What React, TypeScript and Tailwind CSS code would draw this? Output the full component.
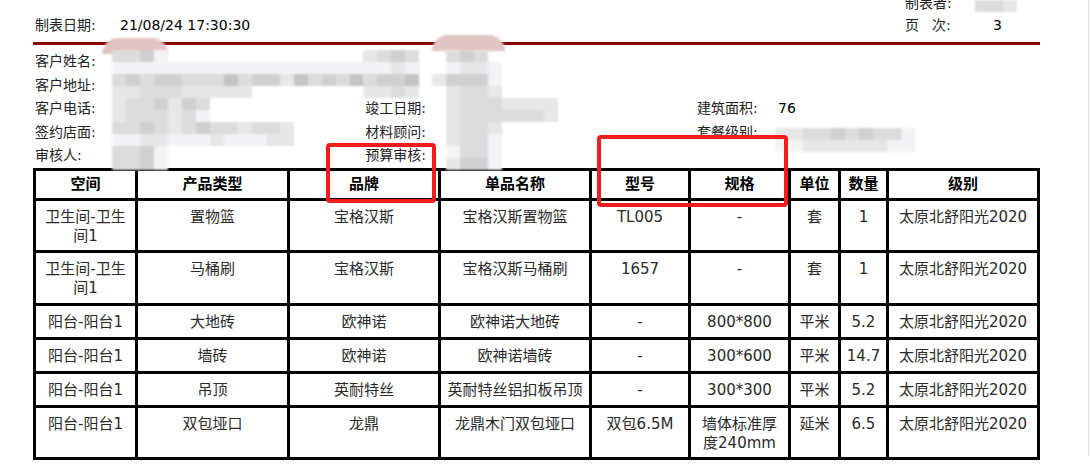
import React from 'react';

const FONT = 'font-["DejaVu_Sans","Noto_Sans_CJK_SC",sans-serif]';

// shade codes for the mosaic (privacy blur) blocks
const SHADE: Record<string, string> = {
  '0': 'bg-transparent',
  '1': 'bg-[#f3f3f5]',
  '2': 'bg-[#e7e7e8]',
  '3': 'bg-[#dcdcdc]',
  '4': 'bg-[#d0d0d0]',
  '5': 'bg-[#c4c4c4]',
};

const Mosaic = ({ x, y, rows }: { x: number; y: number; rows: string[] }) => (
  <div className="absolute blur-[1px]" style={{ left: x, top: y }}>
    {rows.map((r, i) => (
      <div key={i} className="flex">
        {r.split('').map((c, j) => (
          <div key={j} className={`w-[14px] h-[12px] ${SHADE[c]}`} />
        ))}
      </div>
    ))}
  </div>
);

const infoRows = [
  { l: '客户姓名:', m: '', r: '', rv: '' },
  { l: '客户地址:', m: '', r: '', rv: '' },
  { l: '客户电话:', m: '竣工日期:', r: '建筑面积:', rv: '76' },
  { l: '签约店面:', m: '材料顾问:', r: '套餐级别:', rv: '' },
  { l: '审核人:', m: '预算审核:', r: '', rv: '' },
];

const headers = ['空间', '产品类型', '品牌', '单品名称', '型号', '规格', '单位', '数量', '级别'];

const rows: { h: string; cells: React.ReactNode[] }[] = [
  { h: 'h-[49px]', cells: [<>卫生间-卫生<br />间1</>, '置物篮', '宝格汉斯', '宝格汉斯置物篮', 'TL005', '-', '套', '1', '太原北舒阳光2020'] },
  { h: 'h-[50px]', cells: [<>卫生间-卫生<br />间1</>, '马桶刷', '宝格汉斯', '宝格汉斯马桶刷', '1657', '-', '套', '1', '太原北舒阳光2020'] },
  { h: 'h-[31px]', cells: ['阳台-阳台1', '大地砖', '欧神诺', '欧神诺大地砖', '-', '800*800', '平米', '5.2', '太原北舒阳光2020'] },
  { h: 'h-[31px]', cells: ['阳台-阳台1', '墙砖', '欧神诺', '欧神诺墙砖', '-', '300*600', '平米', '14.7', '太原北舒阳光2020'] },
  { h: 'h-[31px]', cells: ['阳台-阳台1', '吊顶', '英耐特丝', '英耐特丝铝扣板吊顶', '-', '300*300', '平米', '5.2', '太原北舒阳光2020'] },
  { h: 'h-[49px]', cells: ['阳台-阳台1', '双包垭口', '龙鼎', '龙鼎木门双包垭口', '双包6.5M', <>墙体标准厚<br />度240mm</>, '延米', '6.5', '太原北舒阳光2020'] },
];

export default function App() {
  return (
    <div className={`relative w-[1090px] h-[464px] overflow-hidden bg-white text-[#222] ${FONT}`}>
      <div className="w-[1089px] h-full border-r border-[#e4e4e4] pl-[33px]">
        <div className="w-[1007px]">
          {/* header */}
          <div className="-mt-[8px] flex text-[14px] leading-[22px]">
            <div className="w-[872px]" />
            <span>制表者:</span>
          </div>
          <div className="flex text-[14px] leading-[22px]">
            <span className="w-[87px] pl-[2px]">制表日期:</span>
            <span className="w-[785px] text-black">21/08/24 17:30:30</span>
            <span className="w-[88px]">页<span className="ml-[13px]">次:</span></span>
            <span className="text-black">3</span>
          </div>
          <div className="mt-[6px] h-[3px] bg-[#8b0000]" />

          {/* customer info */}
          <div className="mt-[5px] text-[14px] leading-[23.5px]">
            {infoRows.map((r, i) => (
              <div key={i} className="flex">
                <span className="w-[79px] pl-[2px]">{r.l}</span>
                <span className="w-[218px]" />
                <span className="w-[96px] text-right">{r.m}</span>
                <span className="w-[271px]" />
                <span className="w-[81px]">{r.r}</span>
                <span className="text-black">{r.rv}</span>
              </div>
            ))}
          </div>

          {/* table */}
          <div className="grid grid-cols-[99px_149px_148px_148px_96px_97px_47px_45px_148px] gap-[3px] bg-black p-[3px]">
            {headers.map((h) => (
              <div key={h} className="h-[27px] bg-white flex items-center justify-center text-[15px] font-bold text-black">
                {h}
              </div>
            ))}
            {rows.map((row, i) =>
              row.cells.map((c, j) => (
                <div key={`${i}-${j}`} className={`${row.h} bg-white pt-[7px] text-center text-[15px] leading-[19px] text-[#2a2a2a] whitespace-nowrap`}>
                  {c}
                </div>
              ))
            )}
          </div>
        </div>
      </div>

      {/* pink smudges from the blur */}
      <div className="absolute left-[102px] top-[38px] w-[66px] h-[16px] rounded-t-full bg-[#e0c4c4] blur-[1px]" />
      <div className="absolute left-[432px] top-[35px] w-[73px] h-[16px] rounded-t-full bg-[#e0c4c4] blur-[1px]" />

      {/* privacy mosaics */}
      <Mosaic
        x={112}
        y={50}
        rows={[
          '3341',
          '1111111111111111111111',
          '343443335344253435443',
          '2233322222',
          '2334243',
          '2333231',
          '3343234332332',
          '1122111211122',
          '3341',
          '3341',
        ]}
      />
      <Mosaic x={363} y={50} rows={['2343', '1121', '3445', '2232']} />
      <Mosaic
        x={432}
        y={50}
        rows={['03430', '01221', '24441', '02332', '023332222', '023333332', '02332', '02331', '01331', '02441']}
      />
      <Mosaic x={775} y={128} rows={['2233434331', '1122222211']} />
      <Mosaic x={975} y={0} rows={['332']} />

      {/* annotation boxes */}
      <div className="absolute left-[326px] top-[143px] w-[110px] h-[60px] rounded-[4px] border-[4px] border-[#f21d1d]" />
      <div className="absolute left-[597px] top-[135px] w-[191px] h-[72px] rounded-[4px] border-[4px] border-[#f21d1d]" />
    </div>
  );
}
